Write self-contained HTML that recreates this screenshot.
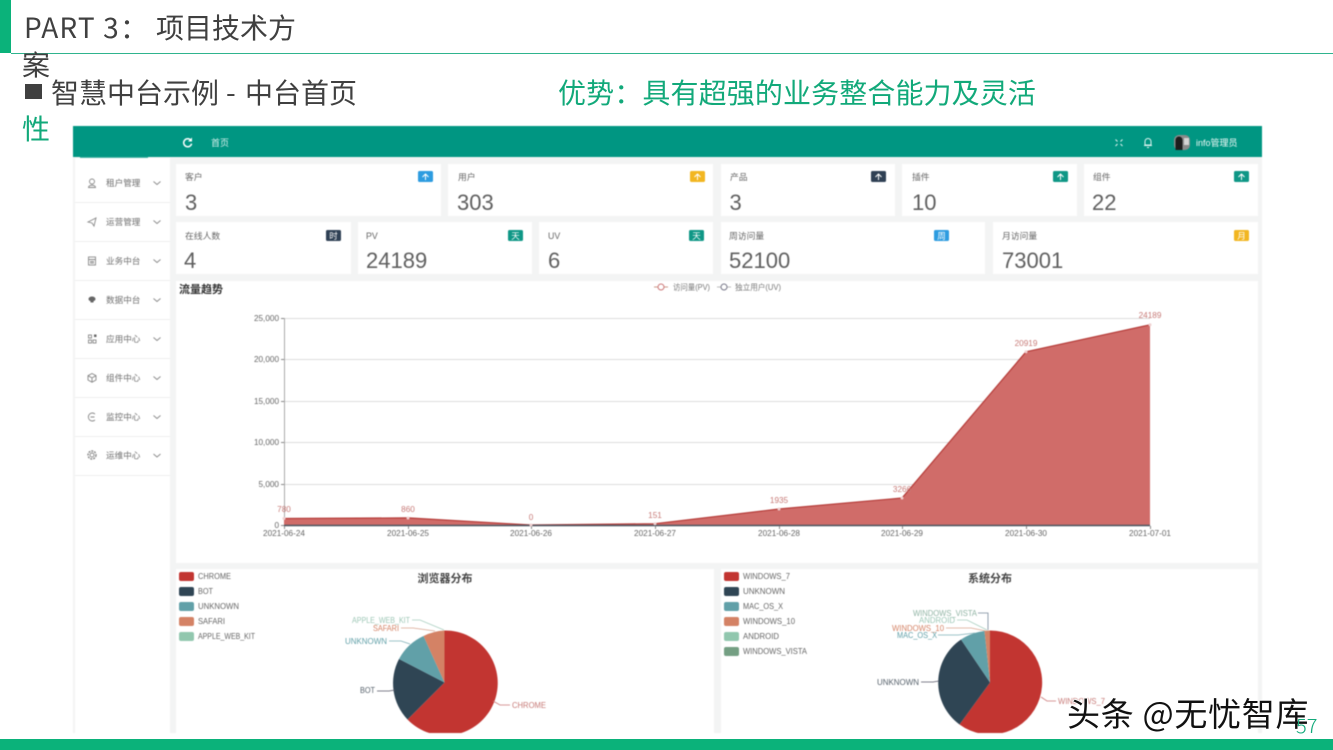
<!DOCTYPE html>
<html><head><meta charset="utf-8">
<style>
html,body{margin:0;padding:0;background:#fff;width:1333px;height:750px;overflow:hidden}
body{position:relative;font-family:"Noto Sans CJK SC","Liberation Sans",sans-serif}
.t{position:absolute;white-space:nowrap;line-height:36px;height:36px;font-size:28px;color:#404040;font-weight:400}
.g{color:#12a97a;font-weight:400}
svg text{font-family:"Liberation Sans","Noto Sans CJK SC",sans-serif}
#dash{position:absolute;left:0;top:0;filter:blur(.45px)}
.wm{position:absolute;left:1067px;top:689px;font-size:33px;line-height:46px;color:#111;white-space:nowrap;letter-spacing:.7px;font-weight:400;
 text-shadow:1px 0 #fff,-1px 0 #fff,0 1px #fff,0 -1px #fff}
</style></head><body>
<svg id="dash" width="1333" height="750" viewBox="0 0 1333 750" xmlns="http://www.w3.org/2000/svg">
<rect x="73" y="126" width="1189" height="607" fill="#f3f4f4"/>
<rect x="73" y="126" width="1189" height="31" fill="#009682"/>
<rect x="80" y="157" width="68" height="1" fill="#4db6a8"/>
<rect x="75" y="158" width="95" height="575" fill="#fff"/>
<g fill="#eeeeee">
<rect x="75" y="202" width="95" height="1"/><rect x="75" y="241" width="95" height="1"/><rect x="75" y="280" width="95" height="1"/><rect x="75" y="319" width="95" height="1"/><rect x="75" y="358" width="95" height="1"/><rect x="75" y="397" width="95" height="1"/><rect x="75" y="436" width="95" height="1"/><rect x="75" y="475" width="95" height="1"/>
</g>
<!-- header -->
<path d="M191 140.500a4 4 0 1 0 .6 3.200" fill="none" stroke="#fff" stroke-width="1.500"/><path d="M192 137.500v4h-4z" fill="#fff"/>
<text x="211" y="146" font-size="9" fill="#d5f0ec">首页</text>
<g fill="none" stroke="#e2f4f1" stroke-width="1"><path d="M1115.500 139.500l2 2M1122.500 139.500l-2 2M1115.500 146l2-2M1122.500 146l-2-2"/>
<path d="M1145 145v-3.500a3 3 0 0 1 6 0V145zM1144 145.500h8M1147 147.500h2"/></g>
<rect x="1174" y="135" width="16" height="15" rx="5" fill="#8a8a8a"/><path d="M1175.500 150v-10a3.500 3.500 0 0 1 7 0v10z" fill="#1c1c1c"/><rect x="1184" y="138" width="5" height="7" fill="#d4d4d4"/>
<text x="1196" y="146" font-size="9" fill="#f0faf8">info管理员</text>
<!-- sidebar -->
<g font-size="8.600" fill="#707070">
<text x="106" y="186">租户管理</text><text x="106" y="225">运营管理</text><text x="106" y="264">业务中台</text><text x="106" y="303">数据中台</text><text x="106" y="342">应用中心</text><text x="106" y="381">组件中心</text><text x="106" y="420">监控中心</text><text x="106" y="458.500">运维中心</text>
</g>
<g fill="none" stroke="#888" stroke-width=".9">
<path d="M153.500 181.500l3.500 3 3.500-3M153.500 220.500l3.500 3 3.500-3M153.500 259.500l3.500 3 3.500-3M153.500 298.500l3.500 3 3.500-3M153.500 337.500l3.500 3 3.500-3M153.500 376.500l3.500 3 3.500-3M153.500 415.500l3.500 3 3.500-3M153.500 454l3.500 3 3.500-3"/>
<circle cx="92" cy="181.500" r="2.500"/><path d="M88.500 187.500c0-3 7-3 7 0z"/>
<path d="M88 222l8-4-2 8-2-3z"/>
<rect x="88.500" y="257" width="7" height="8"/><path d="M88.500 259.500h7M90 261.500h4M90 263h4"/>
<rect x="88.500" y="335" width="3" height="3"/><rect x="88.500" y="340" width="3" height="3"/><rect x="93" y="340" width="3" height="3"/>
<path d="M92 373.500l4 2.200v4.300l-4 2.200-4-2.200v-4.300z"/><path d="M88 375.700l4 2.200 4-2.200M92 378v4"/>
<path d="M95 414a4 4 0 1 0 0 6M90.500 417h4"/>
<circle cx="92" cy="455" r="2"/><circle cx="92" cy="455" r="4" stroke-dasharray="2 1" stroke-width="1.400"/>
</g>
<ellipse cx="92" cy="299" rx="3.500" ry="2.500" fill="#666"/><rect x="90.500" y="301" width="3" height="1.500" fill="#666"/>
<rect x="94" y="334.500" width="2.500" height="2.500" fill="#666"/>
<!-- cards -->
<g fill="#fff">
<rect x="176" y="164" width="265" height="52"/><rect x="448" y="164" width="265" height="52"/><rect x="721" y="164" width="174" height="52"/><rect x="902" y="164" width="175" height="52"/><rect x="1084" y="164" width="174" height="52"/>
<rect x="176" y="222" width="175" height="52"/><rect x="358" y="222" width="174" height="52"/><rect x="539" y="222" width="174" height="52"/><rect x="721" y="222" width="264" height="52"/><rect x="993" y="222" width="265" height="52"/>
<rect x="176" y="281" width="1082" height="282"/><rect x="176" y="569" width="538" height="164"/><rect x="721" y="569" width="537" height="164"/>
</g>
<g font-size="8.800" fill="#666">
<text x="185" y="180">客户</text><text x="458" y="180">用户</text><text x="730" y="180">产品</text><text x="912" y="180">插件</text><text x="1093" y="180">组件</text>
<text x="185" y="239">在线人数</text><text x="366" y="239">PV</text><text x="548" y="239">UV</text><text x="729" y="239">周访问量</text><text x="1002" y="239">月访问量</text>
</g>
<g font-size="22" fill="#5f5f5f">
<text x="185" y="210">3</text><text x="457" y="210">303</text><text x="729.500" y="210">3</text><text x="912" y="210">10</text><text x="1092" y="210">22</text>
<text x="184" y="268">4</text><text x="366" y="268">24189</text><text x="548" y="268">6</text><text x="729" y="268">52100</text><text x="1002" y="268">73001</text>
</g>
<g>
<rect x="418" y="171" width="15" height="11" rx="1.500" fill="#2d9ce0"/><rect x="690" y="171" width="15" height="11" rx="1.500" fill="#f2b621"/><rect x="871" y="171" width="15" height="11" rx="1.500" fill="#2f4054"/><rect x="1053" y="171" width="15" height="11" rx="1.500" fill="#0f9786"/><rect x="1234" y="171" width="15" height="11" rx="1.500" fill="#0f9786"/>
<rect x="326" y="230" width="15" height="11" rx="1.500" fill="#2f4054"/><rect x="508" y="230" width="15" height="11" rx="1.500" fill="#0f9786"/><rect x="689" y="230" width="15" height="11" rx="1.500" fill="#0f9786"/><rect x="934" y="230" width="15" height="11" rx="1.500" fill="#2d9ce0"/><rect x="1234" y="230" width="15" height="11" rx="1.500" fill="#f2b621"/>
</g>
<g fill="none" stroke="#fff" stroke-width="1">
<path d="M425.500 180v-6M422.500 177l3-3 3 3M697.500 180v-6M694.500 177l3-3 3 3M878.500 180v-6M875.500 177l3-3 3 3M1060.500 180v-6M1057.500 177l3-3 3 3M1241.500 180v-6M1238.500 177l3-3 3 3"/>
</g>
<g font-size="8.500" fill="#fff" text-anchor="middle">
<text x="333.500" y="239">时</text><text x="515.500" y="239">天</text><text x="696.500" y="239">天</text><text x="941.500" y="239">周</text><text x="1241.500" y="239">月</text>
</g>
<!-- line chart -->
<text x="179" y="293" font-size="11" font-weight="bold" fill="#333">流量趋势</text>
<g fill="none" stroke="#bbb"><path d="M654 287h14" stroke="#c98"/><circle cx="661" cy="287" r="3" fill="#fff" stroke="#c77"/><path d="M717 287h14"/><circle cx="724" cy="287" r="3" fill="#fff" stroke="#778"/></g>
<g font-size="7.800" fill="#777"><text x="673" y="290" textLength="37" lengthAdjust="spacingAndGlyphs">访问量(PV)</text><text x="735" y="290" textLength="46" lengthAdjust="spacingAndGlyphs">独立用户(UV)</text></g>
<g stroke="#dcdcdc" stroke-width="1">
<path d="M284 318.500H1150M284 359.500H1150M284 401.500H1150M284 442.500H1150M284 484.500H1150"/></g>
<g stroke="#888" stroke-width="1"><path d="M281 318.500h3M281 359.500h3M281 401.500h3M281 442.500h3M281 484.500h3M281 525.500h3"/></g>
<path d="M284.500 318V526" stroke="#aaa" stroke-width="1"/>
<g font-size="8.200" fill="#666" text-anchor="end">
<text x="279" y="321">25,000</text><text x="279" y="362">20,000</text><text x="279" y="404">15,000</text><text x="279" y="445">10,000</text><text x="279" y="487">5,000</text><text x="279" y="528">0</text>
</g>
<path d="M284 518.500L408 517.900 531 525 655 523.700 779 509 902 498 1026 351.800 1150 324.800V525H284Z" fill="#d06c69"/>
<path d="M284 518.500L408 517.900 531 525 655 523.700 779 509 902 498 1026 351.800 1150 324.800" fill="none" stroke="#b53b38" stroke-width="1.200"/>
<path d="M284 525.500H1150" stroke="#4a5560" stroke-width="1.400"/>
<g stroke="#888"><path d="M284.500 526v3M408.500 526v3M531.500 526v3M655.500 526v3M779.500 526v3M902.500 526v3M1026.500 526v3M1150.500 526v3"/></g>
<g fill="#f0d0d0"><circle cx="284" cy="518.500" r="1.500"/><circle cx="408" cy="518" r="1.500"/><circle cx="531" cy="525" r="1.500"/><circle cx="655" cy="523.700" r="1.500"/><circle cx="779" cy="509" r="1.500"/><circle cx="902" cy="498" r="1.500"/><circle cx="1026" cy="351.800" r="1.500"/><circle cx="1150" cy="324.800" r="1.500"/></g>
<g font-size="8.200" fill="#666" text-anchor="middle">
<text x="284" y="536">2021-06-24</text><text x="408" y="536">2021-06-25</text><text x="531" y="536">2021-06-26</text><text x="655" y="536">2021-06-27</text><text x="779" y="536">2021-06-28</text><text x="902" y="536">2021-06-29</text><text x="1026" y="536">2021-06-30</text><text x="1150" y="536">2021-07-01</text>
</g>
<g font-size="8.200" fill="#c77a77" text-anchor="middle">
<text x="284" y="512">780</text><text x="408" y="512">860</text><text x="531" y="520">0</text><text x="655" y="518">151</text><text x="779" y="503">1935</text><text x="902" y="492">3266</text><text x="1026" y="346">20919</text><text x="1150" y="318">24189</text>
</g>
<!-- pie 1 -->
<g>
<rect x="179" y="572" width="15" height="9" rx="2" fill="#c23531"/><rect x="179" y="587" width="15" height="9" rx="2" fill="#2f4554"/><rect x="179" y="602" width="15" height="9" rx="2" fill="#61a0a8"/><rect x="179" y="617" width="15" height="9" rx="2" fill="#d48265"/><rect x="179" y="632" width="15" height="9" rx="2" fill="#91c7ae"/>
</g>
<g font-size="8.400" fill="#666"><text x="198" y="579" textLength="33" lengthAdjust="spacingAndGlyphs">CHROME</text><text x="198" y="594" textLength="15" lengthAdjust="spacingAndGlyphs">BOT</text><text x="198" y="609" textLength="41" lengthAdjust="spacingAndGlyphs">UNKNOWN</text><text x="198" y="624" textLength="27" lengthAdjust="spacingAndGlyphs">SAFARI</text><text x="198" y="639" textLength="57" lengthAdjust="spacingAndGlyphs">APPLE_WEB_KIT</text></g>
<text x="445" y="582" font-size="11" font-weight="bold" fill="#444" text-anchor="middle">浏览器分布</text>
<path d="M444.500 682.500V630.500A52.500 52.500 0 1 1 407.500 719.500Z" fill="#c23531"/>
<path d="M444.500 682.500L407.500 719.500A52.500 52.500 0 0 1 399 659Z" fill="#2f4554"/>
<path d="M444.500 682.500L399 659A52.500 52.500 0 0 1 423.500 636Z" fill="#61a0a8"/>
<path d="M444.500 682.500L423.500 636A52.500 52.500 0 0 1 444.500 630.500Z" fill="#d48265"/>
<g fill="none" stroke-width=".8">
<path d="M412 620h8l24 10" stroke="#a9cfc0"/><path d="M401 628h12l22 3" stroke="#d9a48f"/><path d="M389 641h12l9 3" stroke="#7fb0b7"/><path d="M377 691h12l6-1" stroke="#556"/><path d="M493 701l7 4h10" stroke="#c77"/>
</g>
<g font-size="8.400"><text x="352" y="623" fill="#9dc7b6" textLength="58" lengthAdjust="spacingAndGlyphs">APPLE_WEB_KIT</text><text x="373" y="631" fill="#d48265" textLength="26" lengthAdjust="spacingAndGlyphs">SAFARI</text><text x="345" y="644" fill="#61a0a8" textLength="42" lengthAdjust="spacingAndGlyphs">UNKNOWN</text><text x="360" y="693" fill="#55606a" textLength="15" lengthAdjust="spacingAndGlyphs">BOT</text></g>
<text x="512" y="708" font-size="8.400" fill="#c77a77" textLength="34" lengthAdjust="spacingAndGlyphs">CHROME</text>
<!-- pie 2 -->
<g>
<rect x="724" y="572" width="15" height="9" rx="2" fill="#c23531"/><rect x="724" y="587" width="15" height="9" rx="2" fill="#2f4554"/><rect x="724" y="602" width="15" height="9" rx="2" fill="#61a0a8"/><rect x="724" y="617" width="15" height="9" rx="2" fill="#d48265"/><rect x="724" y="632" width="15" height="9" rx="2" fill="#91c7ae"/><rect x="724" y="647" width="15" height="9" rx="2" fill="#749f83"/>
</g>
<g font-size="8.400" fill="#666"><text x="743" y="579" textLength="47" lengthAdjust="spacingAndGlyphs">WINDOWS_7</text><text x="743" y="594" textLength="42" lengthAdjust="spacingAndGlyphs">UNKNOWN</text><text x="743" y="609" textLength="40" lengthAdjust="spacingAndGlyphs">MAC_OS_X</text><text x="743" y="624" textLength="52" lengthAdjust="spacingAndGlyphs">WINDOWS_10</text><text x="743" y="639" textLength="36" lengthAdjust="spacingAndGlyphs">ANDROID</text><text x="743" y="654" textLength="64" lengthAdjust="spacingAndGlyphs">WINDOWS_VISTA</text></g>
<text x="990" y="582" font-size="11" font-weight="bold" fill="#444" text-anchor="middle">系统分布</text>
<path d="M990 682.500V630.500A52 52 0 1 1 959.500 724.500Z" fill="#c23531"/>
<path d="M990 682.500L959.500 724.500A52 52 0 0 1 961 639.500Z" fill="#2f4554"/>
<path d="M990 682.500L961 639.500A52 52 0 0 1 984.500 631Z" fill="#61a0a8"/>
<path d="M990 682.500L984.500 631A52 52 0 0 1 990 630.500Z" fill="#d48265"/>
<g fill="none" stroke-width=".8">
<path d="M978 613h10v17" stroke="#789"/><path d="M957 620h10l20 10" stroke="#a9cfc0"/><path d="M946 628h25l15 3" stroke="#d9a48f"/><path d="M938 635h20l17-2" stroke="#7fb0b7"/><path d="M921 682h12l6-1" stroke="#556"/><path d="M1041 697l6 4h9" stroke="#c77"/>
</g>
<g font-size="8.400"><text x="913" y="616" fill="#8fb3a3" textLength="64" lengthAdjust="spacingAndGlyphs">WINDOWS_VISTA</text><text x="919" y="623" fill="#9dc7b6" textLength="36" lengthAdjust="spacingAndGlyphs">ANDROID</text><text x="892" y="631" fill="#d48265" textLength="52" lengthAdjust="spacingAndGlyphs">WINDOWS_10</text><text x="897" y="638" fill="#61a0a8" textLength="40" lengthAdjust="spacingAndGlyphs">MAC_OS_X</text><text x="877" y="685" fill="#55606a" textLength="42" lengthAdjust="spacingAndGlyphs">UNKNOWN</text></g>
<text x="1058" y="704" font-size="8.400" fill="#c77a77" textLength="47" lengthAdjust="spacingAndGlyphs">WINDOWS_7</text>
<rect x="73" y="733" width="1189" height="6" fill="#fff"/>
</svg>

<div style="position:absolute;left:0;top:0;width:11px;height:53px;background:#0bb27a"></div>
<div style="position:absolute;left:11px;top:53px;width:1322px;height:1px;background:#2fb48e"></div>
<div class="t" style="left:24px;top:9px;letter-spacing:1.1px">PART 3</div>
<div class="t" style="left:120px;top:9px">：</div>
<div class="t" style="left:156px;top:9px">项目技术方</div>
<div class="t" style="left:22px;top:46px">案</div>
<div style="position:absolute;left:25px;top:84px;width:17px;height:15px;background:#404040"></div>
<div class="t" style="left:51px;top:74px">智慧中台示例</div>
<div class="t" style="left:226px;top:74px">-</div>
<div class="t" style="left:245px;top:74px">中台首页</div>
<div class="t g" style="left:558px;top:74px;letter-spacing:.12px">优势：具有超强的业务整合能力及灵活</div>
<div class="t g" style="left:22px;top:110px">性</div>
<div style="position:absolute;left:0;top:739px;width:1333px;height:11px;background:#0bb27a"></div>
<div class="wm">头条 @无忧智库</div>
<div style="position:absolute;left:1296px;top:713px;font-size:20px;line-height:24px;color:#12a97a;font-weight:300">57</div>
</body></html>
